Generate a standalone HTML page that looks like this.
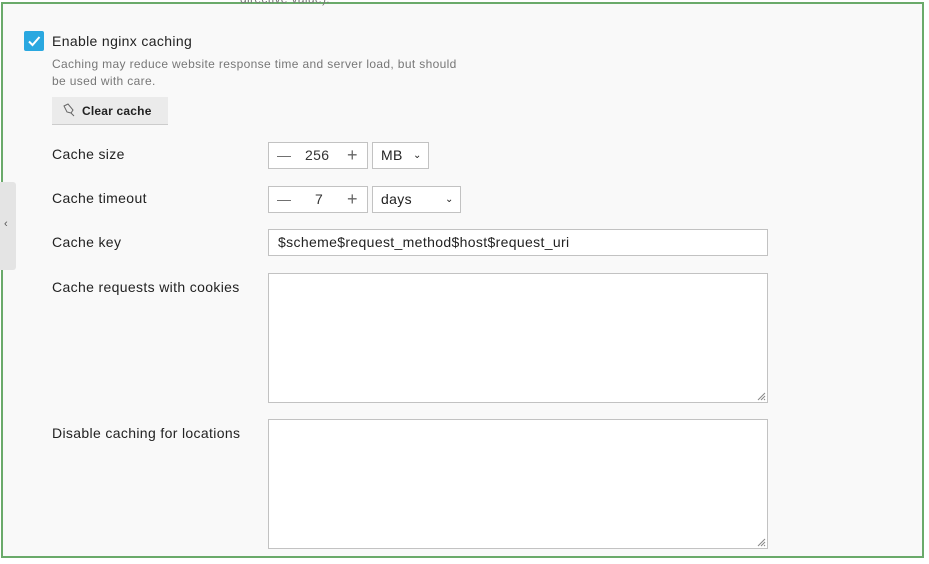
<!DOCTYPE html><html><head><style>
body{margin:0;width:929px;height:564px;background:#fff;font-family:"Liberation Sans",sans-serif;position:relative;overflow:hidden;color:#222;letter-spacing:0.35px}
.frame{position:absolute;left:1px;top:2px;width:919px;height:552px;border:2px solid #6aaa6a;background:#f9f9f9}
.a{position:absolute}
.lbl{font-size:14px;color:#222}
.box{position:absolute;background:#fff;border:1px solid #c2c2c2;box-sizing:border-box}
.grip{position:absolute;right:1px;bottom:1px}
</style></head><body>
<div class="frame"></div>
<div class="a" style="left:240px;top:-8px;font-size:12px;color:#777">directive value).</div>
<div class="a" style="left:0;top:182px;width:16px;height:88px;background:#e4e4e4;border-radius:0 3px 3px 0"></div>
<div class="a" style="left:4px;top:218px;font-size:11px;color:#555">‹</div>
<div class="a" style="left:24px;top:31px;width:20px;height:20px;background:#2aa8e0;border-radius:2px"><svg width="20" height="20"><path d="M5 10.5l3.5 3.5 7-8" stroke="#fff" stroke-width="2" fill="none"/></svg></div>
<div class="a lbl" style="left:52px;top:33px">Enable nginx caching</div>
<div class="a" style="left:52px;top:56px;font-size:12px;color:#777;line-height:17px;width:440px">Caching may reduce website response time and server load, but should<br>be used with care.</div>
<div class="a" style="left:52px;top:97px;width:116px;height:28px;background:#ebebeb;border-bottom:1px solid #ccc;box-sizing:border-box;font-size:12px;font-weight:bold;line-height:28px;padding-left:30px;letter-spacing:0.2px">Clear cache</div>
<svg class="a" style="left:62px;top:103px" width="14" height="14"><path d="M2 3l4-2 5 6-2 3-4-1z M9 10l3 3" stroke="#666" fill="none"/></svg>
<div class="a lbl" style="left:52px;top:146px">Cache size</div>
<div class="a lbl" style="left:52px;top:190px">Cache timeout</div>
<div class="a lbl" style="left:52px;top:234px">Cache key</div>
<div class="a lbl" style="left:52px;top:279px">Cache requests with cookies</div>
<div class="a lbl" style="left:52px;top:425px">Disable caching for locations</div>
<div class="box" style="left:268px;top:142px;width:100px;height:27px;font-size:14px;line-height:25px;color:#333"><span class="a" style="left:8px;color:#666">—</span><span class="a" style="left:36px">256</span><span class="a" style="left:78px;color:#666;font-size:18px">+</span></div>
<div class="box" style="left:372px;top:142px;width:57px;height:27px;font-size:14px;line-height:25px;padding-left:8px">MB<span class="a" style="left:40px;font-size:10px">⌄</span></div>
<div class="box" style="left:268px;top:186px;width:100px;height:27px;font-size:14px;line-height:25px;color:#333"><span class="a" style="left:8px;color:#666">—</span><span class="a" style="left:46px">7</span><span class="a" style="left:78px;color:#666;font-size:18px">+</span></div>
<div class="box" style="left:372px;top:186px;width:89px;height:27px;font-size:14px;line-height:25px;padding-left:8px">days<span class="a" style="left:72px;font-size:10px">⌄</span></div>
<div class="box" style="left:268px;top:229px;width:500px;height:27px;font-size:14px;line-height:25px;padding-left:9px">$scheme$request_method$host$request_uri</div>
<div class="box" style="left:268px;top:273px;width:500px;height:130px"><svg class="grip" width="10" height="10"><path d="M9 2L2 9M9 5L5 9M9 8L8 9" stroke="#888"/></svg></div>
<div class="box" style="left:268px;top:419px;width:500px;height:130px"><svg class="grip" width="10" height="10"><path d="M9 2L2 9M9 5L5 9M9 8L8 9" stroke="#888"/></svg></div>
</body></html>
